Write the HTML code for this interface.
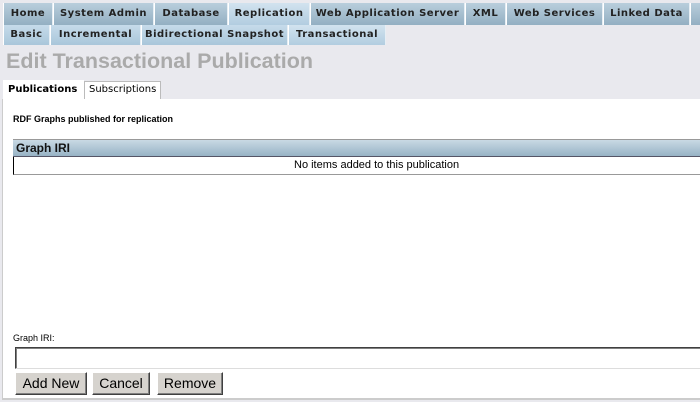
<!DOCTYPE html>
<html><head><style>
*{margin:0;padding:0;box-sizing:border-box}
body{width:700px;height:402px;background:#e9e9ee;font-family:"DejaVu Sans",sans-serif;position:relative;overflow:hidden}
.t{position:absolute;height:22px;font-size:10px;letter-spacing:0.5px;font-weight:bold;color:#222;text-align:center;line-height:21px;border-right:1px solid #e6eef4;border-left:1px solid #fff;white-space:nowrap;overflow:hidden}
.r1{top:3px;background:linear-gradient(#b9cedc,#93afc2);}
.r2{top:25px;height:20px;line-height:20px;background:linear-gradient(#c6dbea,#a9c6da)}
.act{background:linear-gradient(#d2e3ef,#b2cde0)}
.a{position:absolute;font-family:"Liberation Sans",Arial,sans-serif}
.btn{position:absolute;top:372px;height:23px;background:#d6d3ce;border:1px solid;border-color:#fff #404040 #404040 #fff;box-shadow:inset -1px -1px #808080;font:14px "Liberation Sans",Arial,sans-serif;text-align:center;line-height:21px;color:#000}
</style></head><body>
<div class="t r1" style="left:3px;width:50px">Home</div>
<div class="t r1" style="left:53px;width:101px">System Admin</div>
<div class="t r1" style="left:154px;width:74px">Database</div>
<div class="t r1 act" style="left:228px;width:82px">Replication</div>
<div class="t r1" style="left:310px;width:155px">Web Application Server</div>
<div class="t r1" style="left:465px;width:41px">XML</div>
<div class="t r1" style="left:506px;width:97px">Web Services</div>
<div class="t r1" style="left:603px;width:87px">Linked Data</div>
<div class="t r1" style="left:690px;width:20px"></div>
<div class="t r2" style="left:3px;width:47px">Basic</div>
<div class="t r2" style="left:50px;width:91px">Incremental</div>
<div class="t r2" style="left:141px;width:147px">Bidirectional Snapshot</div>
<div class="t r2 act" style="left:288px;width:98px">Transactional</div>
<div class="a" style="left:6px;top:49px;font-size:21.5px;font-weight:bold;color:#aaa">Edit Transactional Publication</div>
<div style="position:absolute;left:3px;top:80px;width:81px;height:19px;background:#fff;font-size:10px;font-weight:bold;line-height:19px;padding-left:5px">Publications</div>
<div style="position:absolute;left:84px;top:81px;width:77px;height:18px;background:#fff;border:1px solid #bbb;border-bottom:none;font-size:10px;line-height:16px;padding-left:4px">Subscriptions</div>
<div style="position:absolute;left:2px;top:99px;width:700px;height:301px;background:#fff;border-left:1px solid #ccc;border-bottom:2px solid #ccc"></div>
<div class="a" style="left:13px;top:114px;font-size:9px;font-weight:bold">RDF Graphs published for replication</div>
<div style="position:absolute;left:13px;top:139px;width:690px;height:18px;background:linear-gradient(#c9d9e4,#97b3c5);border-top:1px solid #999;border-bottom:1px solid #556"></div>
<div class="a" style="left:16px;top:141px;font-size:12px;font-weight:bold;color:#111">Graph IRI</div>
<div style="position:absolute;left:13px;top:157px;width:690px;height:18px;border-left:1px solid #000;border-bottom:1px solid #999"></div>
<div class="a" style="left:294px;top:159px;font-size:11px">No items added to this publication</div>
<div class="a" style="left:13px;top:333px;font-size:9px">Graph IRI:</div>
<div style="position:absolute;left:15px;top:347px;width:690px;height:22px;border:1px solid;border-color:#404040 #ddd #ddd #404040;box-shadow:inset 1px 1px #808080"></div>
<div class="btn" style="left:15px;width:72px">Add New</div>
<div class="btn" style="left:92px;width:58px">Cancel</div>
<div class="btn" style="left:157px;width:66px">Remove</div>
</body></html>
